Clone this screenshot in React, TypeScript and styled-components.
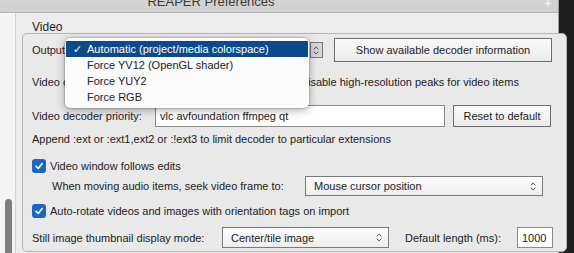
import styled, { createGlobalStyle } from "styled-components";

const GlobalStyle = createGlobalStyle`
  html, body {
    margin: 0;
    padding: 0;
    background: #1e1e1e;
    overflow: hidden;
  }
  body {
    font-family: "Liberation Sans", Arial, sans-serif;
    font-size: 11px;
    color: #222;
  }
`;

const Screen = styled.div`
  display: flex;
  width: 574px;
  height: 253px;
  overflow: hidden;
`;

const Window = styled.div`
  width: 558px;
  display: flex;
  flex-direction: column;
  background: #ececec;
  border-right: 1px solid #9c9c9c;
`;

const TitleBar = styled.div`
  position: relative;
  height: 12px;
  flex: none;
  display: flex;
  justify-content: center;
  align-items: flex-end;
  overflow: hidden;
  background: linear-gradient(#d4d4d4, #d0d0d0);
  border-bottom: 1px solid #b4b4b4;
`;

const Title = styled.div`
  font-size: 13px;
  line-height: 13px;
  color: #3a3a3a;
  margin-right: 136px;
  margin-bottom: 4px;
`;

const ZoomPlus = styled.div`
  position: absolute;
  right: 6px;
  top: -2px;
  color: #f4f4f4;
  font-size: 14px;
  line-height: 10px;
`;

const Body = styled.div`
  flex: 1;
  display: flex;
  min-height: 0;
`;

const Sidebar = styled.div`
  width: 15px;
  flex: none;
  background: #f4f4f4;
  border-right: 1px solid #d2d2d2;
  display: flex;
  flex-direction: column;
  justify-content: flex-end;
  align-items: center;
`;

const ScrollThumb = styled.div`
  width: 7px;
  height: 58px;
  margin-bottom: -4px;
  margin-left: 2px;
  border-radius: 4px;
  background: #7d7d7d;
`;

const Content = styled.div`
  flex: 1;
  padding: 6px 0 0 6px;
  display: flex;
  flex-direction: column;
`;

const SectionTitle = styled.div`
  font-size: 12px;
  line-height: 14px;
  margin: 1px 0 -1px 10px;
`;

const GroupBox = styled.div`
  position: relative;
  width: 534px;
  height: 217px;
  border: 1px solid #b6b6b6;
  border-radius: 5px;
  background: #e9e9e9;
  padding: 0 0 0 9px;
  display: flex;
  flex-direction: column;
`;

const Row = styled.div<{ $top: number; $h: number; $indent?: number }>`
  display: flex;
  align-items: center;
  margin-top: ${(p) => p.$top}px;
  height: ${(p) => p.$h}px;
  padding-left: ${(p) => p.$indent ?? 0}px;
  white-space: nowrap;
`;

const Label = styled.span<{ $w?: number }>`
  width: ${(p) => (p.$w ? `${p.$w}px` : "auto")};
  flex: none;
`;

const Button = styled.div<{ $w: number; $h: number }>`
  width: ${(p) => p.$w}px;
  height: ${(p) => p.$h}px;
  box-sizing: border-box;
  border: 1px solid #6e6e6e;
  background: linear-gradient(#fafafa, #ececec);
  display: flex;
  align-items: center;
  justify-content: center;
  font-size: 11px;
  flex: none;
`;

const TextInput = styled.div<{ $w: number; $h: number }>`
  width: ${(p) => p.$w}px;
  height: ${(p) => p.$h}px;
  box-sizing: border-box;
  border: 1px solid #8a8a8a;
  background: #fff;
  display: flex;
  align-items: center;
  padding-left: 4px;
  flex: none;
`;

const Select = styled.div<{ $w: number; $h: number; $bare?: boolean }>`
  width: ${(p) => p.$w}px;
  height: ${(p) => p.$h}px;
  box-sizing: border-box;
  border: ${(p) => (p.$bare ? "none" : "1px solid #7a7a7a")};
  background: ${(p) => (p.$bare ? "transparent" : "linear-gradient(#fdfdfd, #ededed)")};
  display: flex;
  align-items: center;
  justify-content: space-between;
  padding: ${(p) => (p.$bare ? "0" : "0 6px 0 8px")};
  flex: none;
`;

const Stepper = styled.div`
  width: 13px;
  height: 16px;
  box-sizing: border-box;
  border: 1px solid #7a7a7a;
  background: #d6d6d6;
  display: flex;
  align-items: center;
  justify-content: center;
  flex: none;
`;

const Check = styled.div`
  width: 14px;
  height: 14px;
  border-radius: 3px;
  background: #1b66c9;
  display: flex;
  align-items: center;
  justify-content: center;
  margin-right: 4px;
  flex: none;
`;

const Popup = styled.div`
  position: absolute;
  left: 42px;
  top: 4px;
  width: 244px;
  height: 70px;
  box-sizing: border-box;
  padding-top: 3px;
  background: #fbfbfb;
  border-radius: 5px;
  box-shadow: 0 2px 8px rgba(0, 0, 0, 0.35), 0 0 0 1px rgba(0, 0, 0, 0.12);
  display: flex;
  flex-direction: column;
  z-index: 2;
`;

const PopupItem = styled.div<{ $active?: boolean }>`
  height: 16px;
  display: flex;
  align-items: center;
  padding-left: 21px;
  font-size: 11px;
  position: relative;
  margin: 0 1px;
  background: ${(p) => (p.$active ? "#0c4a8e" : "transparent")};
  color: ${(p) => (p.$active ? "#fff" : "#222")};
`;

const CheckMark = styled.span`
  position: absolute;
  left: 7px;
  font-size: 11px;
`;

const Chevrons = ({ size = 9 }: { size?: number }) => (
  <svg width={size * 0.7} height={size} viewBox="0 0 7 10">
    <path d="M1 3.6 L3.5 1.2 L6 3.6 M1 6.4 L3.5 8.8 L6 6.4" fill="none" stroke="#333" strokeWidth="1" />
  </svg>
);

const Tick = () => (
  <svg width="10" height="10" viewBox="0 0 10 10">
    <path d="M2 5.2 L4.2 7.4 L8.2 2.6" fill="none" stroke="#fff" strokeWidth="1.6" strokeLinecap="round" strokeLinejoin="round" />
  </svg>
);

export default function App() {
  return (
    <>
      <GlobalStyle />
      <Screen>
        <Window>
          <TitleBar>
            <Title>REAPER Preferences</Title>
            <ZoomPlus>+</ZoomPlus>
          </TitleBar>
          <Body>
            <Sidebar>
              <ScrollThumb />
            </Sidebar>
            <Content>
              <SectionTitle>Video</SectionTitle>
              <GroupBox>
                <Popup>
                  <PopupItem $active>
                    <CheckMark>✓</CheckMark>
                    Automatic (project/media colorspace)
                  </PopupItem>
                  <PopupItem>Force YV12 (OpenGL shader)</PopupItem>
                  <PopupItem>Force YUY2</PopupItem>
                  <PopupItem>Force RGB</PopupItem>
                </Popup>

                <Row $top={4} $h={24}>
                  <Label $w={36}>Output:</Label>
                  <Select $w={255} $h={18} $bare>
                    <span />
                    <Stepper>
                      <Chevrons />
                    </Stepper>
                  </Select>
                  <Button $w={218} $h={24} style={{ marginLeft: 11 }}>
                    Show available decoder information
                  </Button>
                </Row>

                <Row $top={10} $h={20}>
                  <Label $w={250}>Video colorspace:</Label>
                  <Check>
                    <Tick />
                  </Check>
                  <span>Disable high-resolution peaks for video items</span>
                </Row>

                <Row $top={13} $h={22}>
                  <Label $w={123}>Video decoder priority:</Label>
                  <TextInput $w={290} $h={22}>vlc avfoundation ffmpeg qt</TextInput>
                  <Button $w={98} $h={22} style={{ marginLeft: 8 }}>
                    Reset to default
                  </Button>
                </Row>

                <Row $top={4} $h={16}>
                  Append :ext or :ext1,ext2 or :!ext3 to limit decoder to particular extensions
                </Row>

                <Row $top={11} $h={16}>
                  <Check>
                    <Tick />
                  </Check>
                  Video window follows edits
                </Row>

                <Row $top={2} $h={20} $indent={20}>
                  <Label $w={253}>When moving audio items, seek video frame to:</Label>
                  <Select $w={238} $h={20}>
                    Mouse cursor position
                    <Chevrons />
                  </Select>
                </Row>

                <Row $top={7} $h={16}>
                  <Check>
                    <Tick />
                  </Check>
                  Auto-rotate videos and images with orientation tags on import
                </Row>

                <Row $top={8} $h={21}>
                  <Label $w={190}>Still image thumbnail display mode:</Label>
                  <Select $w={167} $h={21}>
                    Center/tile image
                    <Chevrons />
                  </Select>
                  <Label $w={112} style={{ marginLeft: 16 }}>
                    Default length (ms):
                  </Label>
                  <TextInput $w={36} $h={21}>
                    1000
                  </TextInput>
                </Row>
              </GroupBox>
            </Content>
          </Body>
        </Window>
      </Screen>
    </>
  );
}
